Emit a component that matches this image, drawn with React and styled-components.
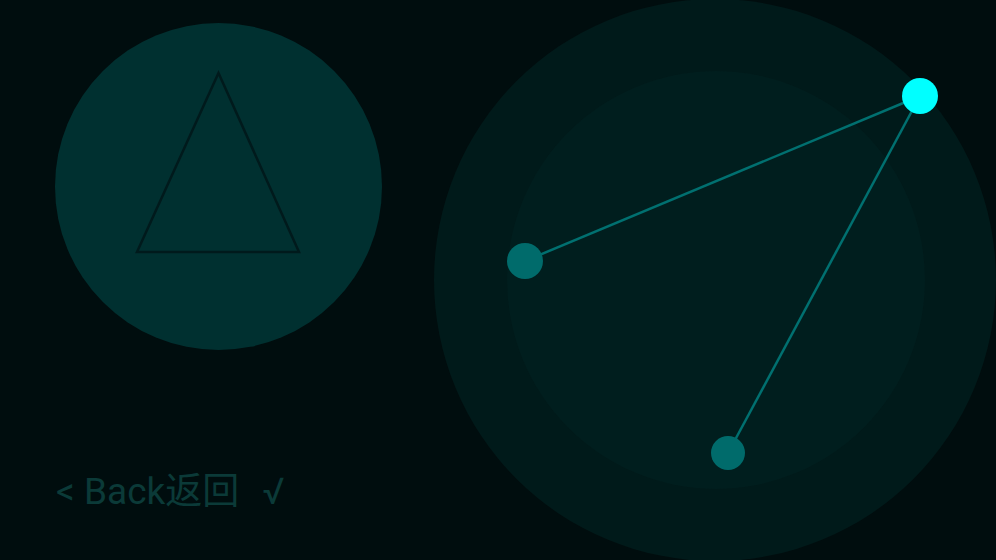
import React from 'react';
import styled, { createGlobalStyle } from 'styled-components';

const nodes = [
  { id: 'hub', x: 486, y: 96, r: 18, active: true },
  { id: 'left', x: 91, y: 261, r: 18 },
  { id: 'bottom', x: 294, y: 453, r: 17 },
];

const links = [
  ['hub', 'left'],
  ['hub', 'bottom'],
];

const App = () => {
  const byId = Object.fromEntries(nodes.map(n => [n.id, n]));

  return (
    <>
      <PageStyle />
      <Screen>
        <LeftPane>
          <Badge>
            <svg width='327' height='327' viewBox='0 0 327 327'>
              <polygon
                points='163.5,50 82,229 244,229'
                fill='none'
                stroke='#001a1c'
                strokeWidth='2.5'
                strokeLinejoin='miter'
              />
            </svg>
          </Badge>
          <BackButton>
            &lt; Back返回 <Check>√</Check>
          </BackButton>
        </LeftPane>
        <Radar>
          <svg width='562' height='560' viewBox='0 0 562 560'>
            <circle cx='281' cy='280' r='281' fill='#001a1a' />
            <circle cx='282' cy='280' r='209' fill='#001e1e' />
            {links.map(([a, b]) => (
              <line
                key={a + b}
                x1={byId[a].x}
                y1={byId[a].y}
                x2={byId[b].x}
                y2={byId[b].y}
                stroke='#007070'
                strokeWidth='2.5'
              />
            ))}
            {nodes.map(n => (
              <circle key={n.id} cx={n.x} cy={n.y} r={n.r} fill={n.active ? '#00ffff' : '#006b6b'} />
            ))}
          </svg>
        </Radar>
      </Screen>
    </>
  );
};

export default App;

const PageStyle = createGlobalStyle({
  'html, body': {
    margin: 0,
    padding: 0,
    background: '#000d0e',
  },
  body: {
    fontFamily: 'Roboto, "Noto Sans CJK SC", sans-serif',
  },
});

const Screen = styled.div({
  display: 'flex',
  width: 996,
  height: 560,
  overflow: 'hidden',
  background: '#000d0e',
});

const LeftPane = styled.div({
  width: 434,
  flexShrink: 0,
  paddingLeft: 55,
  paddingTop: 23,
  boxSizing: 'border-box',
  display: 'flex',
  flexDirection: 'column',
});

const Badge = styled.div({
  width: 327,
  height: 327,
  borderRadius: '50%',
  background: '#003030',
  display: 'flex',
});

const BackButton = styled.div({
  marginTop: 123,
  marginLeft: 1,
  color: '#0b3a38',
  fontSize: 37,
  lineHeight: '37px',
  whiteSpace: 'pre',
});

const Check = styled.span({
  marginLeft: 14,
});

const Radar = styled.div({
  width: 562,
  height: 560,
  flexShrink: 0,
  display: 'flex',
});
